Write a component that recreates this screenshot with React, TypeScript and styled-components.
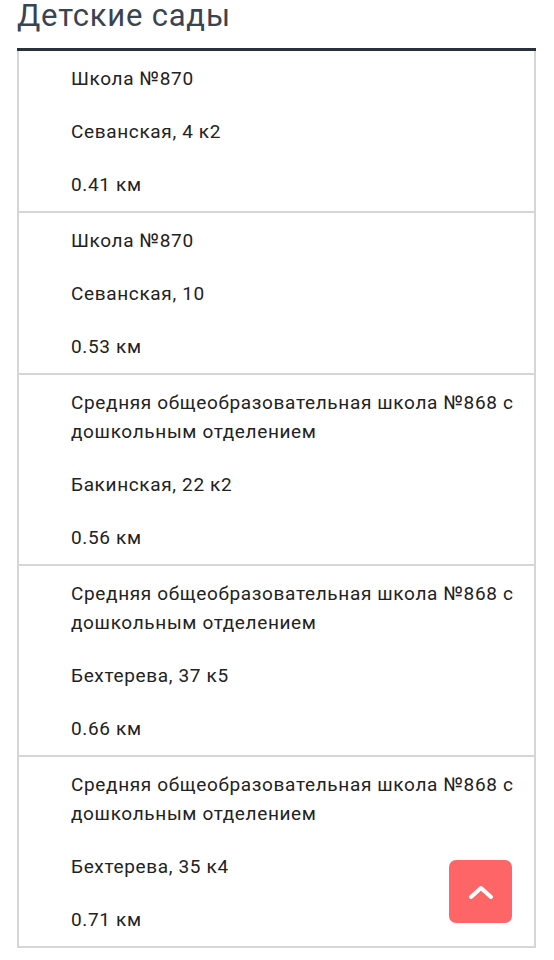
import { FC } from "react";
import styled, { createGlobalStyle } from "styled-components";

const GlobalStyle = createGlobalStyle`
  body {
    margin: 0;
    background: #ffffff;
    font-family: Roboto, "Noto Sans", sans-serif;
  }
`;

const Page = styled.div`
  padding: 0 18px 0 17px;
  position: relative;
  height: 960px;
  overflow: hidden;
`;

const Title = styled.h2`
  margin: 0 0 16px;
  font-size: 31px;
  line-height: 32px;
  letter-spacing: 0.8px;
  font-weight: 400;
  color: #394351;
`;

const List = styled.div`
  border-top: 3px solid #2b313b;
  display: flex;
  flex-direction: column;
`;

const Item = styled.div`
  border: 2px solid #d6d6d6;
  border-top: none;
  padding: 13px 16px 12px 52px;
  display: flex;
  flex-direction: column;
  gap: 24px;
`;

const Line = styled.div`
  font-size: 19px;
  line-height: 29px;
  letter-spacing: 0.65px;
  color: #222222;
`;

const UpButton = styled.button`
  position: absolute;
  left: 449px;
  top: 860px;
  width: 63px;
  height: 63px;
  border: none;
  border-radius: 7px;
  background: #fe6566;
  display: flex;
  align-items: center;
  justify-content: center;
  cursor: pointer;
`;

interface School {
  name: string;
  address: string;
  distance: string;
}

const schools: School[] = [
  { name: "Школа №870", address: "Севанская, 4 к2", distance: "0.41 км" },
  { name: "Школа №870", address: "Севанская, 10", distance: "0.53 км" },
  {
    name: "Средняя общеобразовательная школа №868 с дошкольным отделением",
    address: "Бакинская, 22 к2",
    distance: "0.56 км",
  },
  {
    name: "Средняя общеобразовательная школа №868 с дошкольным отделением",
    address: "Бехтерева, 37 к5",
    distance: "0.66 км",
  },
  {
    name: "Средняя общеобразовательная школа №868 с дошкольным отделением",
    address: "Бехтерева, 35 к4",
    distance: "0.71 км",
  },
];

const App: FC = () => {
  return (
    <Page>
      <GlobalStyle />
      <Title>Детские сады</Title>
      <List>
        {schools.map((s, i) => (
          <Item key={i}>
            <Line>{s.name}</Line>
            <Line>{s.address}</Line>
            <Line>{s.distance}</Line>
          </Item>
        ))}
      </List>
      <UpButton aria-label="Наверх">
        <svg width="30" height="20" viewBox="0 0 30 20">
          <path
            d="M5 15 L15 6 L25 15"
            fill="none"
            stroke="#ffffff"
            strokeWidth="4"
            strokeLinecap="round"
            strokeLinejoin="round"
          />
        </svg>
      </UpButton>
    </Page>
  );
};

export default App;
